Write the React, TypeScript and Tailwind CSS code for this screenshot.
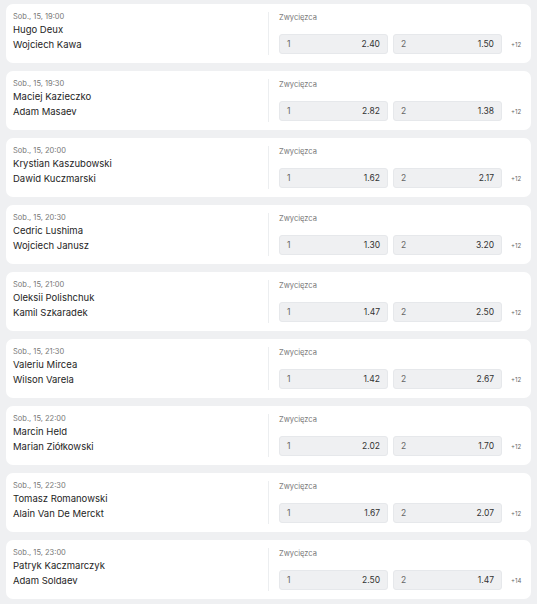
import React from "react";

type Match = { time: string; a: string; b: string; o1: string; o2: string; more: string };

const matches: Match[] = [
  { time: "Sob., 15, 19:00", a: "Hugo Deux", b: "Wojciech Kawa", o1: "2.40", o2: "1.50", more: "+12" },
  { time: "Sob., 15, 19:30", a: "Maciej Kazieczko", b: "Adam Masaev", o1: "2.82", o2: "1.38", more: "+12" },
  { time: "Sob., 15, 20:00", a: "Krystian Kaszubowski", b: "Dawid Kuczmarski", o1: "1.62", o2: "2.17", more: "+12" },
  { time: "Sob., 15, 20:30", a: "Cedric Lushima", b: "Wojciech Janusz", o1: "1.30", o2: "3.20", more: "+12" },
  { time: "Sob., 15, 21:00", a: "Oleksii Polishchuk", b: "Kamil Szkaradek", o1: "1.47", o2: "2.50", more: "+12" },
  { time: "Sob., 15, 21:30", a: "Valeriu Mircea", b: "Wilson Varela", o1: "1.42", o2: "2.67", more: "+12" },
  { time: "Sob., 15, 22:00", a: "Marcin Held", b: "Marian Ziółkowski", o1: "2.02", o2: "1.70", more: "+12" },
  { time: "Sob., 15, 22:30", a: "Tomasz Romanowski", b: "Alain Van De Merckt", o1: "1.67", o2: "2.07", more: "+12" },
  { time: "Sob., 15, 23:00", a: "Patryk Kaczmarczyk", b: "Adam Soldaev", o1: "2.50", o2: "1.47", more: "+14" },
];

function Odd({ label, value }: { label: string; value: string }) {
  return (
    <div className="w-[109px] h-[20px] flex items-center justify-between px-[7px] rounded-[3px] bg-[#eff0f2] border border-[#e6e8eb] text-[8.5px] text-[#333]">
      <span className="text-[#666]">{label}</span>
      <span>{value}</span>
    </div>
  );
}

function Card({ m }: { m: Match }) {
  return (
    <div className="h-[59px] bg-white rounded-[7px] flex py-[8px]">
      <div className="w-[262px] pl-[7px] flex flex-col">
        <div className="text-[7.5px] leading-[10px] text-[#777]">{m.time}</div>
        <div className="text-[9.5px] leading-[15px] text-[#1e1e1e] mt-[0px]">{m.a}</div>
        <div className="text-[9.5px] leading-[15px] text-[#1e1e1e]">{m.b}</div>
      </div>
      <div className="w-px bg-[#eceef0]" />
      <div className="flex-1 pl-[10px] flex flex-col justify-between pb-[1px]">
        <div className="text-[7.5px] leading-[10px] text-[#777] mt-[1px]">Zwycięzca</div>
        <div className="flex items-center gap-[5px]">
          <Odd label="1" value={m.o1} />
          <Odd label="2" value={m.o2} />
          <span className="ml-[4px] text-[6px] text-[#666]">{m.more}</span>
        </div>
      </div>
    </div>
  );
}

export default function App() {
  return (
    <div
      className="w-[537px] h-[604px] bg-[#eff0f2] px-[6px] pt-[4px] flex flex-col gap-[8px]"
      style={{ fontFamily: "Inter, 'Noto Sans', sans-serif" }}
    >
      {matches.map((m, i) => (
        <Card key={i} m={m} />
      ))}
    </div>
  );
}
